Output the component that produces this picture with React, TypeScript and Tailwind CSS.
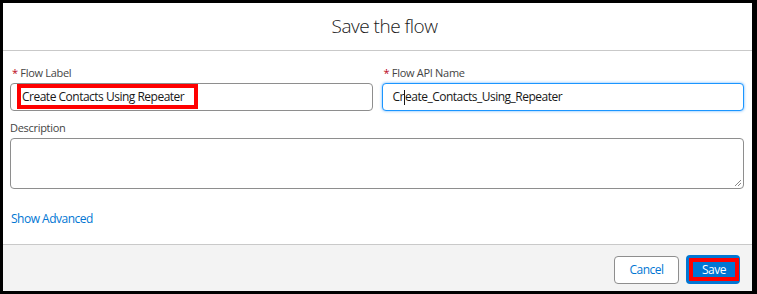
export default function App() {
  return (
    <div
      className="w-[757px] h-[294px] bg-white border-l-[3px] border-t-[3px] border-r-[5px] border-b-[3px] border-black flex flex-col text-[#181818]"
      style={{ fontFamily: '"Open Sans", "Noto Sans", sans-serif' }}
    >
      {/* header */}
      <div className="h-[48px] border-b border-[#c9c9c9] flex items-center justify-center pl-[14px]">
        <h2 className="text-[19px] font-light tracking-[-0.5px] text-[#181818] leading-none">Save the flow</h2>
      </div>

      {/* body */}
      <div className="flex-1 px-[7px] pr-[8px] pt-[14px]">
        <div className="flex gap-[9px]">
          <div className="flex-1">
            <label className="block text-[11px] tracking-[-0.3px] text-[#444] leading-[16px] ml-[2px]">
              <span className="text-[#ba0517]">* </span>Flow Label
            </label>
            <div className="relative mt-[2px]">
              <div className="h-[28px] border border-[#8e8e8e] rounded-[4px] bg-white" />
              <div className="absolute left-[7px] top-[1px] w-[181px] h-[25px] border-[4px] border-[#ff0000] flex items-center pl-[1px] whitespace-nowrap">
                <span className="text-[12px] tracking-[-0.5px] text-[#181818] leading-none">Create Contacts Using Repeater</span>
              </div>
            </div>
          </div>
          <div className="flex-1">
            <label className="block text-[11px] tracking-[-0.3px] text-[#444] leading-[16px] ml-[2px]">
              <span className="text-[#ba0517]">* </span>Flow API Name
            </label>
            <div className="mt-[2px] h-[28px] border border-[#1b96ff] rounded-[4px] bg-white shadow-[0_0_3px_#66b3ff] flex items-center pl-[10px] whitespace-nowrap">
              <span className="text-[12px] tracking-[-0.5px] text-[#181818] leading-none flex items-center">
                Cr<span className="inline-block w-px h-[15px] bg-[#181818]" />eate_Contacts_Using_Repeater
              </span>
            </div>
          </div>
        </div>

        <label className="block text-[11px] tracking-[-0.3px] text-[#444] leading-[16px] mt-[9px]">Description</label>
        <div className="relative mt-[2px] h-[51px] border border-[#8e8e8e] rounded-[4px] bg-white">
          <svg className="absolute right-[1px] bottom-[1px]" width="9" height="9" viewBox="0 0 9 9">
            <path d="M8 2 L2 8 M8 5 L5 8" stroke="#888" strokeWidth="1" />
          </svg>
        </div>

        <div className="mt-[22px] ml-[1px] text-[12px] tracking-[-0.5px] text-[#0176d3] leading-[16px]">Show Advanced</div>
      </div>

      {/* footer */}
      <div className="h-[47px] border-t border-[#c9c9c9] bg-[#f3f3f3] flex items-start justify-end gap-[7px] pt-[11px] pr-[12px]">
        <button className="w-[65px] h-[28px] border border-[#8e8e8e] rounded-[4px] bg-white text-[12px] tracking-[-0.5px] text-[#0176d3]">
          Cancel
        </button>
        <button className="w-[54px] h-[29px] -mt-[1px] rounded-[4px] bg-[#0176d3] p-[3px] pr-[1px]">
          <span className="flex h-full items-center justify-center border-[4px] border-[#ff0000] bg-[#0176d3] text-[12px] tracking-[-0.5px] text-white leading-none">
            Save
          </span>
        </button>
      </div>
    </div>
  )
}
